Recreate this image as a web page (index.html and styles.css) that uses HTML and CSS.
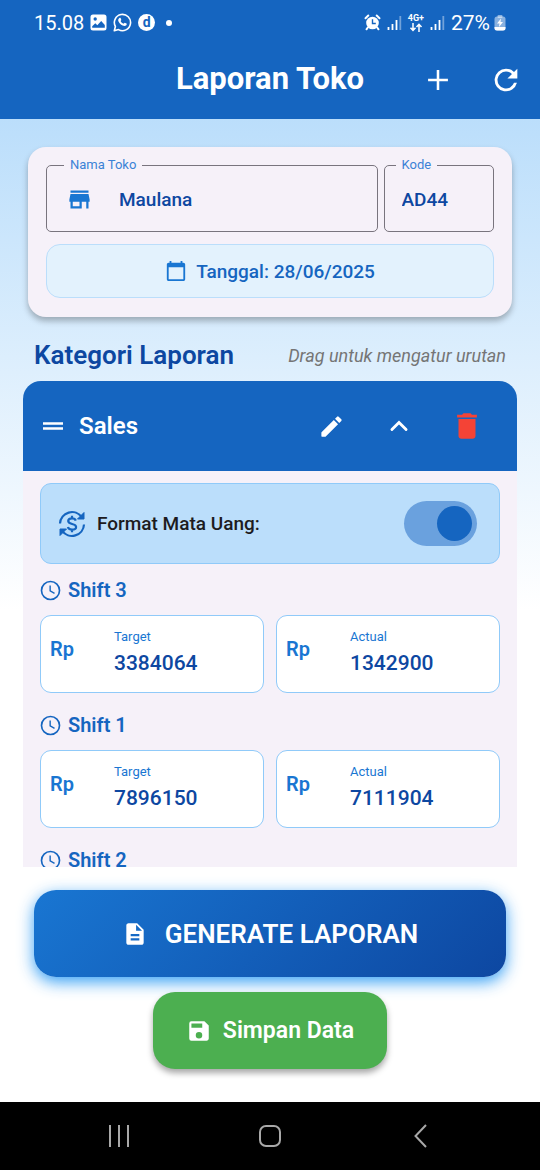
FILE: index.html
```html
<!DOCTYPE html>
<html lang="id">
<head>
<meta charset="utf-8">
<meta name="viewport" content="width=device-width, initial-scale=1">
<title>Laporan Toko</title>
<link rel="stylesheet" href="styles.css">
</head>
<body>
<svg class="sprite" aria-hidden="true">
  <symbol id="signal" viewBox="0 0 15 16"><path d="M1.5 12v3M5.5 9v6M9.5 5v10" stroke="#fff" stroke-width="1.8"/><path d="M13.3 1v14" stroke="#fff" stroke-opacity=".4" stroke-width="1.8"/></symbol>
  <symbol id="clock" viewBox="0 0 24 24"><g fill="none" stroke="currentColor" stroke-width="1.9"><circle cx="12" cy="12" r="10.3"/><path d="M11.6 6.2v6.3l5 2.9" stroke-width="1.6"/></g></symbol>
</svg>
<div class="app">
  <div class="status">
    <div class="status-group">
      <span class="time">15.08</span>
      <svg width="17" height="17" viewBox="0 0 17 17"><path fill="#fff" fill-rule="evenodd" d="M3 .5h11A2.500 2.500 0 0 1 16.500 3v11a2.500 2.500 0 0 1-2.500 2.500H3A2.500 2.500 0 0 1 .5 14V3A2.500 2.500 0 0 1 3 .5zM5.200 3.300a1.700 1.700 0 1 0 0 3.400 1.700 1.700 0 0 0 0-3.400zM2.200 13.800h12.600V11l-3.600-4-3.900 4.200-2-1.900-3.100 2.900z"/></svg>
      <svg width="19" height="19" viewBox="0 0 19 19"><path d="M1.300 17.700l1.100-4.200A8.100 8.100 0 1 1 5.500 16.600z" fill="none" stroke="#fff" stroke-width="1.600" stroke-linejoin="round"/><path fill="#fff" d="M6.400 5c.5-.5 1-.3 1.200.1l.7 1.600c.1.400-.5 1-.7 1.300.6 1.300 1.600 2.200 3 2.800.3-.2.800-1.100 1.200-1l1.700.8c.5.300.2 1.400-.4 1.900-1 .7-2.200.6-3.500 0-2-.9-3.400-2.400-4.200-4.200-.5-1.300-.1-2.500 1-3.300z"/></svg>
      <span class="badge-d">d</span>
      <span class="dot"></span>
    </div>
    <div class="status-group status-right">
      <svg width="17" height="17" viewBox="0 0 17 17"><g fill="none" stroke="#fff" stroke-width="2" stroke-linecap="round"><path d="M1.500 4.200l2.800-2.700M15.500 4.200l-2.800-2.700M3.800 13.500L2.500 15.300M13.200 13.500l1.300 1.800"/></g><circle cx="8.500" cy="9" r="6.300" fill="#fff"/><path d="M8.500 5.200v4.300h3.300" fill="none" stroke="#1565c0" stroke-width="1.400"/></svg>
      <svg width="15" height="16"><use href="#signal"/></svg>
      <span class="net">4G+<svg width="14" height="9" viewBox="0 0 14 9"><path d="M4 0v7M1.500 4.800L4 7.500l2.500-2.700M10 9V1.500M7.500 4L10 1.300 12.500 4" fill="none" stroke="#fff" stroke-width="1.500"/></svg></span>
      <svg width="15" height="16"><use href="#signal"/></svg>
      <span class="battery">27%
      <svg width="12" height="16" viewBox="0 0 12 16"><rect x="3.500" width="5" height="3" rx="1" fill="#fff" opacity=".5"/><rect x=".5" y="1.500" width="11" height="14" rx="2.500" fill="#fff" opacity=".5"/><path d="M.5 12h11v1a2.500 2.500 0 0 1-2.500 2.500H3A2.500 2.500 0 0 1 .5 13z" fill="#fff"/><path d="M7 3.500L3 8.600h2.500L5 12l4-5H6.500z" fill="#fff"/></svg></span>
    </div>
  </div>
  <header class="bar">
    <h1>Laporan Toko</h1>
    <div class="actions">
      <button class="icon-btn" aria-label="Tambah"><svg width="34" height="34" viewBox="0 0 24 24" fill="currentColor"><path d="M19 12.900h-6.100V19h-1.800v-6.100H5v-1.800h6.100V5h1.800v6.100H19z"/></svg></button>
      <button class="icon-btn" aria-label="Muat ulang"><svg width="34" height="34" viewBox="0 0 24 24" fill="currentColor"><path d="M17.650 6.350A7.958 7.958 0 0 0 12 4a8 8 0 1 0 7.730 10h-2.080A6 6 0 1 1 12 6c1.660 0 3.140.69 4.220 1.780L13 11h7V4z"/></svg></button>
    </div>
  </header>

  <main class="page">
    <section class="card">
      <div class="fields">
        <fieldset class="field with-icon">
          <legend><label for="toko">Nama Toko</label></legend>
          <div class="field-row">
            <svg class="store" width="27" height="27" viewBox="0 0 24 24" fill="currentColor"><path d="M20 4H4v2h16zm1 10v-2l-1-5H4l-1 5v2h1v6h10v-6h4v6h2v-6zm-9 4H6v-4h6z"/></svg>
            <input id="toko" type="text" value="Maulana">
          </div>
        </fieldset>
        <fieldset class="field">
          <legend><label for="kode">Kode</label></legend>
          <div class="field-row"><input id="kode" type="text" value="AD44"></div>
        </fieldset>
      </div>
      <button class="date">
        <svg width="22" height="22" viewBox="0 0 24 24" fill="currentColor"><path d="M20 3h-1V1h-2v2H7V1H5v2H4c-1.100 0-2 .9-2 2v16c0 1.100.9 2 2 2h16c1.100 0 2-.9 2-2V5c0-1.100-.9-2-2-2zm0 18H4V8h16z"/></svg>
        Tanggal: 28/06/2025
      </button>
    </section>

    <div class="heading">
      <h2>Kategori Laporan</h2>
      <em>Drag untuk mengatur urutan</em>
    </div>

    <section class="category">
      <div class="cat-head">
        <svg width="30" height="30" viewBox="0 0 24 24" fill="currentColor"><path d="M20 9H4v2h16zM4 15h16v-2H4z"/></svg>
        <h3>Sales</h3>
        <button class="icon-btn" aria-label="Ubah"><svg width="27" height="27" viewBox="0 0 24 24" fill="currentColor"><path d="M3 17.460v3.040c0 .28.220.5.5.5h3.040c.13 0 .26-.05.350-.150L17.810 9.940l-3.750-3.750L3.150 17.100a.5.5 0 0 0-.150.360zM20.710 7.040a1 1 0 0 0 0-1.410l-2.340-2.340a1 1 0 0 0-1.410 0l-1.830 1.830 3.750 3.750z"/></svg></button>
        <button class="icon-btn" aria-label="Tutup"><svg width="34" height="34" viewBox="0 0 24 24" fill="none" stroke="currentColor" stroke-width="2" stroke-linecap="round"><path d="M7 14.500l5-5 5 5"/></svg></button>
        <button class="icon-btn danger" aria-label="Hapus"><svg width="34" height="34" viewBox="0 0 24 24" fill="currentColor"><path d="M6 19c0 1.100.9 2 2 2h8c1.100 0 2-.9 2-2V7H6zM19 4h-3.500l-1-1h-5l-1 1H5v2h14z"/></svg></button>
      </div>
      <div class="cat-body">
        <label class="format">
          <svg width="28" height="28" viewBox="0 0 28 28" fill="none" stroke="currentColor" stroke-width="2.200"><path d="M2 13.500A12 12 0 0 1 23.800 7.200M26 14.500A12 12 0 0 1 4.200 20.800"/><path d="M26 2.500V9h-6.500zM2 25.500V19h6.500z" fill="currentColor" stroke-width="1"/><path d="M17.800 10.600c-.5-1.500-1.900-2.200-3.800-2.200-2.300 0-3.800 1.100-3.800 2.700 0 3.900 7.900 1.900 7.900 5.900 0 1.700-1.700 2.700-4.100 2.700-2.200 0-3.700-.9-4.100-2.600M14 5.800v2.600M14 19.600v2.600"/></svg>
          <span>Format Mata Uang:</span>
          <input type="checkbox" role="switch" class="switch" checked>
        </label>

        <div class="shift">
          <h4><svg width="21" height="21"><use href="#clock"/></svg>Shift 3</h4>
          <div class="pair">
            <label class="money"><b>Rp</b><span class="stack"><span>Target</span><input type="text" value="3384064"></span></label>
            <label class="money"><b>Rp</b><span class="stack"><span>Actual</span><input type="text" value="1342900"></span></label>
          </div>
        </div>
        <div class="shift">
          <h4><svg width="21" height="21"><use href="#clock"/></svg>Shift 1</h4>
          <div class="pair">
            <label class="money"><b>Rp</b><span class="stack"><span>Target</span><input type="text" value="7896150"></span></label>
            <label class="money"><b>Rp</b><span class="stack"><span>Actual</span><input type="text" value="7111904"></span></label>
          </div>
        </div>
        <div class="shift">
          <h4><svg width="21" height="21"><use href="#clock"/></svg>Shift 2</h4>
        </div>
      </div>
    </section>

    <div class="footer">
      <button class="generate">
        <svg width="26" height="26" viewBox="0 0 24 24" fill="currentColor"><path d="M14 2H6c-1.100 0-2 .9-2 2v16c0 1.100.9 2 2 2h12c1.100 0 2-.9 2-2V8zm2 16H8v-2h8zm0-4H8v-2h8zm-3-5V3.500L18.500 9z"/></svg>
        GENERATE LAPORAN
      </button>
      <button class="save">
        <svg width="26" height="26" viewBox="0 0 24 24" fill="currentColor"><path d="M17 3H5a2 2 0 0 0-2 2v14a2 2 0 0 0 2 2h14c1.100 0 2-.9 2-2V7zm-5 16a3 3 0 1 1 0-6 3 3 0 0 1 0 6zm3-10H5V5h10z"/></svg>
        Simpan Data
      </button>
    </div>
  </main>

  <nav class="nav">
    <button aria-label="Terbaru"><svg width="24" height="24" viewBox="0 0 24 24"><path d="M3 1v22M12 1v22M21 1v22"/></svg></button>
    <button aria-label="Beranda"><svg width="24" height="24" viewBox="0 0 24 24"><rect x="2" y="2" width="20" height="20" rx="6"/></svg></button>
    <button aria-label="Kembali"><svg width="24" height="24" viewBox="0 0 24 24"><path d="M17 1L6.500 12 17 23"/></svg></button>
  </nav>
</div>
</body>
</html>
```
FILE: styles.css
```css
* { box-sizing: border-box; margin: 0; }
body { font-family: Roboto, "Noto Sans", sans-serif; color: #0d47a1; }
button, input { font: inherit; color: inherit; border: 0; background: none; padding: 0; }
input { width: 100%; min-width: 0; outline: 0; }
button { cursor: pointer; }
svg { display: block; flex: none; }
.sprite { position: absolute; width: 0; height: 0; }

.app { display: flex; flex-direction: column; height: 100vh; }

.status {
  display: flex; justify-content: space-between; align-items: center;
  height: 40px; padding: 5px 34px 0; background: #1565c0; color: #fff;
}
.status-group { display: flex; align-items: center; gap: 6px; }
.time { font-size: 20px; line-height: 24px; }
.battery { display: flex; align-items: center; gap: 4px; font-size: 21px; line-height: 24px; }
.badge-d {
  width: 17px; height: 17px; border-radius: 50%; background: #fff; color: #1565c0;
  font-size: 14px; font-weight: 700; line-height: 16px; text-align: center;
}
.dot { width: 6px; height: 6px; margin-left: 5px; border-radius: 50%; background: #fff; }
.net { display: flex; flex-direction: column; align-items: center; font-size: 9px; font-weight: 700; line-height: 9px; }

.bar {
  display: grid; grid-template-columns: 1fr auto 1fr; align-items: center;
  height: 79px; background: #1565c0; color: #fff;
}
.bar h1 { grid-column: 2; padding-bottom: 2px; font-size: 31px; font-weight: 700; line-height: 38px; }
.actions { display: flex; justify-content: flex-end; }
.icon-btn { display: flex; justify-content: center; align-items: center; width: 68px; height: 68px; flex: none; }

.page {
  flex: 1; min-height: 0; display: flex; flex-direction: column;
  background: linear-gradient(#bbdefb, #fff 50%);
}

.card {
  margin: 28px 28px 0; padding: 10px 18px 19px; border-radius: 18px;
  background: #f6f1f9; box-shadow: 0 4px 6px rgba(0, 0, 0, .28);
}
.fields { display: grid; grid-template-columns: 3fr 1fr; gap: 6px; }
.field { min-width: 0; margin: 0; padding: 0 11px 6px; border: 1px solid #79747e; border-radius: 5px; }
.field legend { padding: 0 6px; color: #3b82d6; font-size: 13px; line-height: 16px; }
.field-row { display: flex; align-items: center; height: 52px; padding: 0 6px; font-size: 19px; font-weight: 500; }
.with-icon { padding-left: 17px; }
.with-icon .field-row { padding-left: 2px; }
.store { margin-right: 26px; color: #1976d2; }
.date {
  display: flex; align-items: center; justify-content: center; gap: 9px;
  width: 100%; height: 54px; margin-top: 12px; border: 1px solid #bbdefb; border-radius: 14px;
  background: #e3f2fd; color: #1565c0; font-size: 19px; font-weight: 500;
}
.date svg { color: #1976d2; }

.heading { display: flex; align-items: center; justify-content: space-between; padding: 21px 34px 9px; }
.heading h2 { font-size: 26px; font-weight: 600; line-height: 34px; }
.heading em { color: #757575; font-size: 18px; }

.category {
  flex: 1; min-height: 0; margin: 0 23px; overflow-y: auto; scrollbar-width: none;
  border-radius: 18px 18px 0 0; background: #f6f1f9;
}
.cat-head {
  display: flex; align-items: center; height: 90px; padding: 0 16px 0 15px;
  background: #1565c0; color: #fff;
}
.cat-head h3 { flex: 1; margin-left: 11px; font-size: 24px; font-weight: 600; }
.danger { color: #f44336; }

.cat-body { padding: 12px 17px; }
.format {
  display: flex; align-items: center; gap: 11px; height: 81px; padding: 0 22px 0 17px;
  border: 1px solid #90caf9; border-radius: 11px; background: #bbdefb; color: #1565c0;
}
.format span { flex: 1; color: #1d1b20; font-size: 19px; font-weight: 500; }
.switch {
  appearance: none; display: flex; justify-content: flex-end; flex: none;
  width: 73px; height: 45px; padding: 5px; border-radius: 23px; background: #6aa1de;
}
.switch::before { content: ""; width: 35px; height: 35px; border-radius: 50%; background: #1565c0; }
.switch:not(:checked) { justify-content: flex-start; }

.shift { padding: 13px 0 6px; }
.shift h4 {
  display: flex; align-items: center; gap: 7px; color: #1565c0;
  font-size: 20px; font-weight: 600; line-height: 27px;
}
.pair { display: grid; grid-template-columns: 1fr 1fr; gap: 12px; margin-top: 11px; }
.money {
  display: flex; align-items: flex-start; height: 78px; padding: 11px 9px;
  border: 1px solid #90caf9; border-radius: 11px; background: #fff;
}
.money b { flex: none; width: 64px; color: #1976d2; font-size: 20px; font-weight: 600; line-height: 44px; }
.stack { display: flex; flex-direction: column; flex: 1; min-width: 0; color: #1976d2; font-size: 13px; line-height: 20px; }
.stack input { height: 32px; color: #0d47a1; font-size: 21px; font-weight: 500; }

.footer { display: flex; flex-direction: column; align-items: center; gap: 15px; padding: 23px 34px 33px; }
.generate, .save { display: flex; align-items: center; justify-content: center; border-radius: 22px; color: #fff; font-weight: 600; }
.generate {
  gap: 17px; width: 100%; height: 87px; font-size: 26px;
  background: linear-gradient(135deg, #1976d2, #0d47a1);
  box-shadow: 0 5px 16px rgba(33, 150, 243, .9);
}
.save {
  gap: 11px; height: 77px; padding: 0 33px; background: #4caf50; font-size: 23px;
  box-shadow: 0 4px 6px rgba(0, 0, 0, .35);
}

.nav { display: flex; height: 68px; padding: 0 43px; background: #000; }
.nav button { display: flex; flex: 1; align-items: center; justify-content: center; }
.nav svg { fill: none; stroke: #a8a8a8; stroke-width: 2; }
```
